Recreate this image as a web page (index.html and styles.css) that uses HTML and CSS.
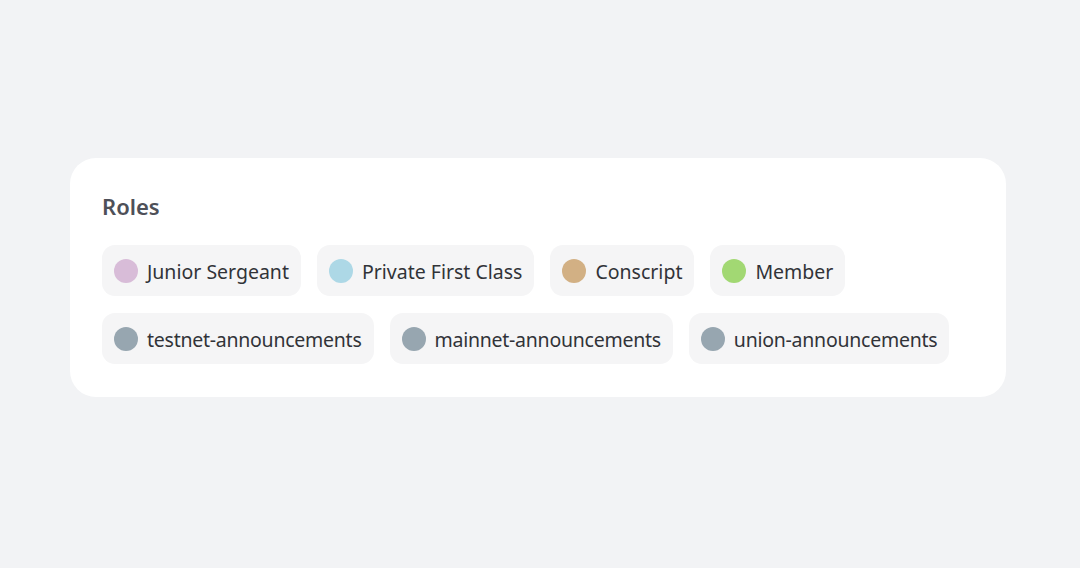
FILE: index.html
```html
<!DOCTYPE html>
<html>
<head>
<meta charset="utf-8">
<link rel="stylesheet" href="styles.css">
</head>
<body>
<div class="page">
  <section class="card">
    <h2 class="title">Roles</h2>
    <div class="roles">
      <div class="row">
        <div class="chip"><span class="dot dot-pink"></span><span class="name">Junior Sergeant</span></div>
        <div class="chip"><span class="dot dot-blue"></span><span class="name">Private First Class</span></div>
        <div class="chip"><span class="dot dot-tan"></span><span class="name">Conscript</span></div>
        <div class="chip"><span class="dot dot-green"></span><span class="name">Member</span></div>
      </div>
      <div class="row">
        <div class="chip chip-channel"><span class="dot dot-grey"></span><span class="name">testnet-announcements</span></div>
        <div class="chip chip-channel"><span class="dot dot-grey"></span><span class="name">mainnet-announcements</span></div>
        <div class="chip chip-channel"><span class="dot dot-grey"></span><span class="name">union-announcements</span></div>
      </div>
    </div>
  </section>
</div>
</body>
</html>
```
FILE: styles.css
```css
html, body {
  margin: 0;
  padding: 0;
  background: #f2f3f5;
  font-family: "Noto Sans", "Open Sans", sans-serif;
}
.page {
  width: 1080px;
  height: 568px;
  box-sizing: border-box;
  padding: 158px 74px 0 70px;
}
.card {
  background: #ffffff;
  border-radius: 26px;
  padding: 30px 32px 33px;
}
.title {
  margin: 0 0 20px;
  font-size: 22px;
  font-weight: 600;
  line-height: 37px;
  color: #4e5058;
}
.roles {
  display: flex;
  flex-direction: column;
  gap: 17px;
}
.row {
  display: flex;
  gap: 16px;
}
.chip {
  display: flex;
  align-items: center;
  gap: 9px;
  height: 51px;
  padding: 0 12px;
  background: #f5f5f6;
  border-radius: 13px;
}
.dot {
  width: 24px;
  height: 24px;
  border-radius: 50%;
  flex: none;
}
.dot-pink { background: #d8bcd8; }
.dot-blue { background: #add8e6; }
.dot-tan { background: #d2b084; }
.dot-green { background: #a2d873; }
.dot-grey { background: #97a6b0; }
.name {
  font-size: 19.5px;
  color: #313338;
  line-height: 24px;
  padding-top: 3px;
}
.chip-channel .name {
  letter-spacing: -0.25px;
}
```
